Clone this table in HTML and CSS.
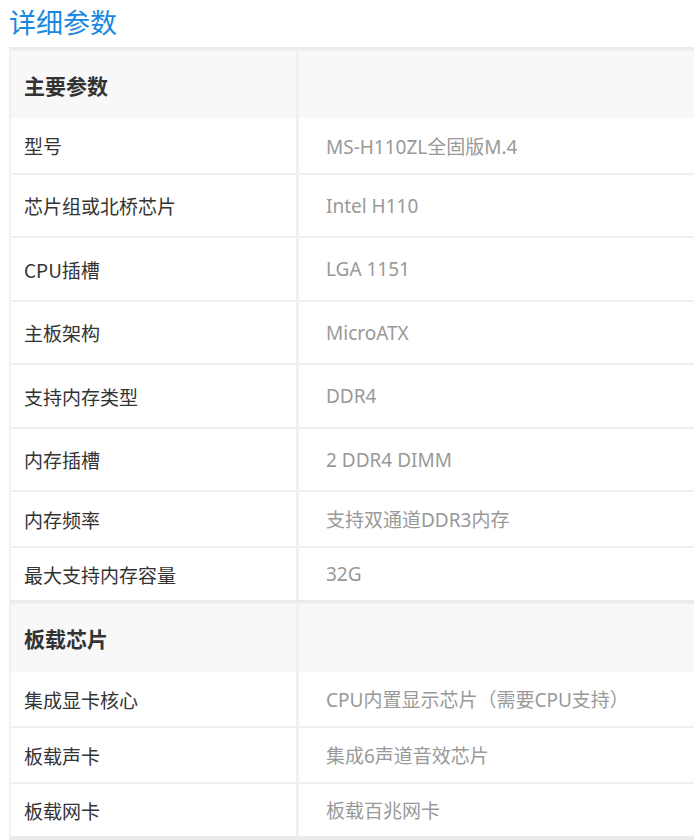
FILE: index.html
```html
<!DOCTYPE html>
<html lang="zh-CN">
<head>
<meta charset="utf-8">
<title>详细参数</title>
<link rel="stylesheet" href="styles.css">
</head>
<body>
<h2 class="title">详细参数</h2>
<div class="params">
  <section class="section">
    <div class="row head"><div class="label">主要参数</div><div class="value"></div></div>
    <div class="row mid"><div class="label">型号</div><div class="value">MS-H110ZL全固版M.4</div></div>
    <div class="row tall"><div class="label">芯片组或北桥芯片</div><div class="value">Intel H110</div></div>
    <div class="row taller"><div class="label">CPU插槽</div><div class="value">LGA 1151</div></div>
    <div class="row tall"><div class="label">主板架构</div><div class="value">MicroATX</div></div>
    <div class="row taller"><div class="label">支持内存类型</div><div class="value">DDR4</div></div>
    <div class="row tall"><div class="label">内存插槽</div><div class="value">2 DDR4 DIMM</div></div>
    <div class="row"><div class="label">内存频率</div><div class="value">支持双通道DDR3内存</div></div>
    <div class="row short"><div class="label">最大支持内存容量</div><div class="value">32G</div></div>
  </section>
  <section class="section">
    <div class="row head head-lg"><div class="label">板载芯片</div><div class="value"></div></div>
    <div class="row"><div class="label">集成显卡核心</div><div class="value">CPU内置显示芯片（需要CPU支持）</div></div>
    <div class="row"><div class="label">板载声卡</div><div class="value">集成6声道音效芯片</div></div>
    <div class="row short"><div class="label">板载网卡</div><div class="value">板载百兆网卡</div></div>
  </section>
</div>
</body>
</html>
```

FILE: styles.css
```css
html, body {
  margin: 0;
  padding: 0;
  background: #ffffff;
  overflow: hidden;
}
body {
  font-family: "Noto Sans", "Noto Sans CJK SC", sans-serif;
  color: #333333;
}
.title {
  margin: 0;
  padding-left: 9px;
  height: 47px;
  line-height: 43px;
  font-size: 27px;
  font-weight: normal;
  color: #1787e0;
  font-family: "Noto Sans CJK SC", sans-serif;
}
.params {
  margin-left: 9px;
}
.section {
  border-top: 3px solid #ebebeb;
  border-left: 2px solid #f0f0f0;
}
.section:last-child {
  border-bottom: 4px solid #ebebeb;
}
.row {
  display: flex;
  height: 54px;
  border-top: 2px solid #f0f0f0;
  background: #ffffff;
  font-size: 19px;
}
.row.mid { height: 55px; }
.row.tall { height: 61px; }
.row.taller { height: 62px; }
.row.short { height: 52px; }
.row.head {
  height: 67px;
  border-top: 1px solid #f2f2f2;
  background: #f8f8f8;
}
.row.head-lg { height: 68px; }
.row.head + .row {
  border-top: 0;
}
.label {
  width: 272px;
  flex: none;
  padding-left: 13px;
  border-right: 3px solid #f0f0f0;
  display: flex;
  align-items: center;
  color: #333333;
  font-family: "Noto Sans CJK SC", sans-serif;
}
.head .label {
  font-weight: bold;
  font-size: 21px;
}
.value {
  flex: 1;
  padding-left: 27px;
  display: flex;
  align-items: center;
  color: #999999;
}
```
